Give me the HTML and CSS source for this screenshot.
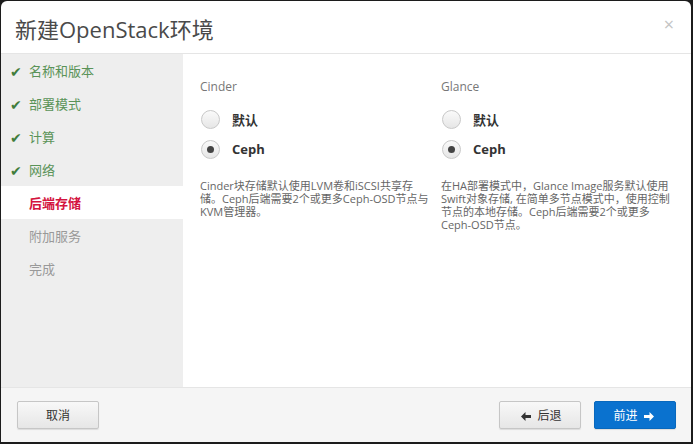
FILE: index.html
```
<!DOCTYPE html>
<html lang="zh-CN">
<head>
    <meta charset="UTF-8">
    <title>新建OpenStack环境</title>
    <link rel="stylesheet" href="styles.css">
</head>
<body>
    <div class="modal">
        <div class="modal-header">
            <h3>新建OpenStack环境</h3>
            <span class="close">&times;</span>
        </div>
        <div class="modal-body">
            <ul class="wizard-nav">
                <li class="done"><span class="check">&#10004;</span>名称和版本</li>
                <li class="done"><span class="check">&#10004;</span>部署模式</li>
                <li class="done"><span class="check">&#10004;</span>计算</li>
                <li class="done"><span class="check">&#10004;</span>网络</li>
                <li class="active">后端存储</li>
                <li>附加服务</li>
                <li>完成</li>
            </ul>
            <div class="pane">
                <div class="storage-col">
                    <div class="col-title">Cinder</div>
                    <label class="radio"><span class="radio-btn"></span>默认</label>
                    <label class="radio"><span class="radio-btn checked"></span>Ceph</label>
                    <p class="desc">Cinder块存储默认使用LVM卷和iSCSI共享存储。Ceph后端需要2个或更多Ceph-OSD节点与KVM管理器。</p>
                </div>
                <div class="storage-col">
                    <div class="col-title">Glance</div>
                    <label class="radio"><span class="radio-btn"></span>默认</label>
                    <label class="radio"><span class="radio-btn checked"></span>Ceph</label>
                    <p class="desc">在HA部署模式中，Glance Image服务默认使用Swift对象存储, 在简单多节点模式中，使用控制节点的本地存储。Ceph后端需要2个或更多Ceph-OSD节点。</p>
                </div>
            </div>
        </div>
        <div class="modal-footer">
            <button class="btn">取消</button>
            <div class="footer-right">
                <button class="btn">
                    <svg class="arrow" width="10" height="9" viewBox="0 0 10 9"><path d="M0 4.5 L4.5 0 L4.5 3 L10 3 L10 6 L4.5 6 L4.5 9 Z" fill="#333"/></svg>
                    后退
                </button>
                <button class="btn btn-primary">
                    前进
                    <svg class="arrow" width="10" height="9" viewBox="0 0 10 9"><path d="M10 4.5 L5.5 0 L5.5 3 L0 3 L0 6 L5.5 6 L5.5 9 Z" fill="white"/></svg>
                </button>
            </div>
        </div>
    </div>
</body>
</html>
```

FILE: styles.css
```
body {
    margin: 0;
    padding: 1px;
    background-color: #1c1c1c;
    font-family: "Open Sans", "Noto Sans CJK SC", sans-serif;
}
.modal {
    width: 690px;
    height: 441px;
    background-color: white;
    border-radius: 6px 6px 0 0;
    display: flex;
    flex-direction: column;
    overflow: hidden;
}
.modal-header {
    height: 52px;
    border-bottom: 1px solid #e5e5e5;
    display: flex;
    align-items: center;
    justify-content: space-between;
    padding: 0 17px 0 14px;
}
.modal-header h3 {
    margin: 0;
    font-size: 22px;
    font-weight: normal;
    color: #4a4a4a;
    padding-top: 2px;
}
.close {
    font-size: 18px;
    color: #c4c4c4;
    margin-top: -6px;
}
.modal-body {
    flex: 1;
    display: flex;
}
.wizard-nav {
    width: 182px;
    margin: 0;
    padding: 0;
    list-style: none;
    background-color: #eeeeee;
}
.wizard-nav li {
    height: 33px;
    line-height: 35px;
    padding-left: 28px;
    font-size: 13px;
    color: #999;
    position: relative;
}
.wizard-nav li.done {
    color: #5a9358;
}
.wizard-nav li.active {
    background-color: white;
    color: #d4143f;
    font-weight: bold;
}
.check {
    position: absolute;
    left: 9px;
    font-size: 14px;
    color: #3f7d3c;
}
.pane {
    flex: 1;
    display: flex;
    padding: 24px 0 0 17px;
}
.storage-col {
    width: 241px;
}
.col-title {
    font-size: 12px;
    color: #777;
    margin-bottom: 9px;
}
.radio {
    display: flex;
    align-items: center;
    height: 30px;
    font-size: 13px;
    font-weight: bold;
    color: #333;
}
.radio-btn {
    width: 17px;
    height: 17px;
    border: 1px solid #c8c8c8;
    border-radius: 50%;
    background: linear-gradient(#fafafa, #e6e6e6);
    margin: 0 12px 0 1px;
    display: flex;
    align-items: center;
    justify-content: center;
}
.radio-btn.checked::after {
    content: "";
    width: 7px;
    height: 7px;
    border-radius: 50%;
    background-color: #444;
}
.desc {
    margin: 15px 0 0;
    width: 232px;
    font-size: 11px;
    line-height: 13px;
    color: #666;
}
.modal-footer {
    height: 54px;
    border-top: 1px solid #e5e5e5;
    background-color: #f5f5f5;
    display: flex;
    align-items: center;
    justify-content: space-between;
    padding: 0 15px 0 16px;
}
.footer-right {
    display: flex;
    gap: 13px;
}
.btn {
    width: 82px;
    height: 28px;
    border: 1px solid #c6c6c6;
    border-radius: 2px;
    background: linear-gradient(#f8f8f8, #e6e6e6);
    font-family: "Open Sans", "Noto Sans CJK SC", sans-serif;
    font-size: 12px;
    color: #333;
    box-shadow: 0 1px 1px rgba(0, 0, 0, 0.1);
}
.btn-primary {
    background: #0a72cf;
    border-color: #0868bd;
    color: white;
}
.arrow {
    vertical-align: -1px;
    margin: 0 3px;
}
```
